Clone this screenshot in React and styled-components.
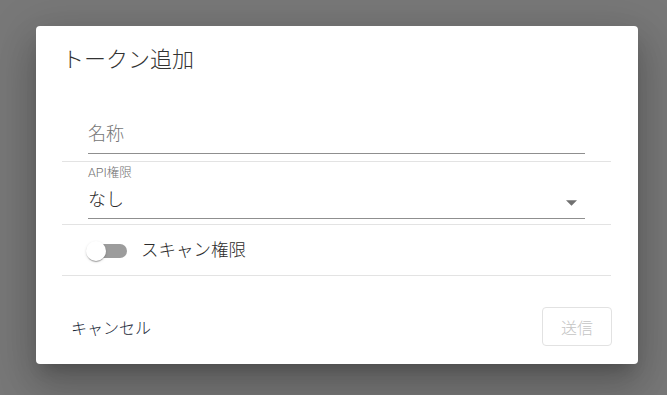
import React from "react";
import styled, { createGlobalStyle } from "styled-components";

const Global = createGlobalStyle`
  html, body { margin: 0; padding: 0; }
  body { font-family: Roboto, "Noto Sans CJK JP", sans-serif; }
  * { box-sizing: border-box; }
`;

const Overlay = styled.div`
  width: 667px;
  height: 395px;
  background: #787878;
  padding: 26px 0 0 36px;
  overflow: hidden;
`;

const Dialog = styled.div`
  width: 602px;
  height: 338px;
  background: #fff;
  border-radius: 4px;
  box-shadow: 0 11px 15px -7px rgba(0, 0, 0, 0.2),
    0 24px 38px 3px rgba(0, 0, 0, 0.14), 0 9px 46px 8px rgba(0, 0, 0, 0.12);
  display: flex;
  flex-direction: column;
`;

const Title = styled.h2`
  margin: 0;
  padding: 18px 26px 0;
  font-size: 22px;
  line-height: 32px;
  font-weight: 300;
  color: #333;
`;

const Body = styled.div`
  padding: 0 27px 0 26px;
`;

const Divider = styled.div`
  height: 1px;
  background: #e3e3e3;
`;

const Field = styled.div`
  margin: 0 26px;
  padding-top: ${(p) => p.$top}px;
  padding-bottom: ${(p) => p.$bottom}px;
  margin-bottom: ${(p) => p.$after}px;
  border-bottom: 1px solid #8f8f8f;
`;

const Placeholder = styled.div`
  font-size: 18px;
  line-height: 24px;
  font-weight: 300;
  color: #757575;
`;

const Label = styled.div`
  font-size: 12.5px;
  line-height: 16px;
  font-weight: 300;
  color: #707070;
  margin-bottom: 7px;
`;

const SelectRow = styled.div`
  display: flex;
  align-items: center;
`;

const Value = styled.div`
  flex: 1;
  font-size: 18px;
  line-height: 24px;
  font-weight: 300;
  color: #2b2b2b;
`;

const Arrow = styled.svg`
  width: 11px;
  height: 6px;
  margin: 5px 8px 0 0;
  fill: #707070;
`;

const SwitchRow = styled.div`
  height: 50px;
  display: flex;
  align-items: center;
  padding-left: 24px;
`;

const SwitchBox = styled.span`
  position: relative;
  width: 41px;
  height: 20px;
  display: inline-block;
  margin-top: 2px;
`;

const Track = styled.span`
  position: absolute;
  left: 6px;
  top: 3px;
  width: 35px;
  height: 14px;
  border-radius: 7px;
  background: #9c9c9c;
`;

const Thumb = styled.span`
  position: absolute;
  left: 0;
  top: 0;
  width: 20px;
  height: 20px;
  border-radius: 50%;
  background: #fff;
  box-shadow: 0 2px 1px -1px rgba(0, 0, 0, 0.2), 0 1px 1px 0 rgba(0, 0, 0, 0.14),
    0 1px 3px 0 rgba(0, 0, 0, 0.12);
`;

const SwitchLabel = styled.span`
  margin-left: 14px;
  font-size: 17.5px;
  line-height: 24px;
  font-weight: 300;
  color: #2b2b2b;
`;

const Actions = styled.div`
  display: flex;
  align-items: center;
  justify-content: space-between;
  padding: 31px 26px 18px 27px;
`;

const TextButton = styled.button`
  border: none;
  background: none;
  padding: 0 8px;
  height: 39px;
  font-family: inherit;
  font-size: 16px;
  font-weight: 300;
  color: #1a2838;
  cursor: pointer;
`;

const OutlineButton = styled.button`
  width: 70px;
  height: 39px;
  border: 1px solid #e2e2e2;
  border-radius: 4px;
  background: #fff;
  font-family: inherit;
  font-size: 16px;
  font-weight: 300;
  color: #c4c4c4;
`;

export default function App() {
  return (
    <>
      <Global />
      <Overlay>
        <Dialog>
          <Title>トークン追加</Title>
          <Body>
            <Field $top={46} $bottom={7} $after={7}>
              <Placeholder>名称</Placeholder>
            </Field>
            <Divider />
            <Field $top={3} $bottom={6} $after={5}>
              <Label>API権限</Label>
              <SelectRow>
                <Value>なし</Value>
                <Arrow viewBox="0 0 10 5">
                  <path d="M0 0 L10 0 L5 5 Z" />
                </Arrow>
              </SelectRow>
            </Field>
            <Divider />
            <SwitchRow>
              <SwitchBox>
                <Track />
                <Thumb />
              </SwitchBox>
              <SwitchLabel>スキャン権限</SwitchLabel>
            </SwitchRow>
            <Divider />
          </Body>
          <Actions>
            <TextButton>キャンセル</TextButton>
            <OutlineButton disabled>送信</OutlineButton>
          </Actions>
        </Dialog>
      </Overlay>
    </>
  );
}
